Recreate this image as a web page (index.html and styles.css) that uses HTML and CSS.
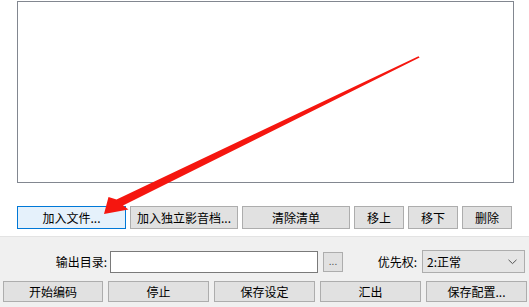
FILE: index.html
```html
<!DOCTYPE html>
<html lang="zh">
<head>
<meta charset="utf-8">
<link rel="stylesheet" href="styles.css">
</head>
<body>
<div class="app">
  <div class="top">
    <div class="list"></div>
    <div class="row1">
      <button class="btn focus w-add">加入文件...</button>
      <button class="btn w-mid">加入独立影音档...</button>
      <button class="btn w-mid">清除清单</button>
      <button class="btn w-small">移上</button>
      <button class="btn w-small">移下</button>
      <button class="btn w-small">删除</button>
    </div>
  </div>
  <div class="bottom">
    <div class="row2">
      <span class="lbl lbl-out">输出目录:</span>
      <div class="input"></div>
      <button class="btn dots">...</button>
      <span class="lbl lbl-pri">优先权:</span>
      <div class="combo">
        <span class="combo-text">2:正常</span>
        <svg class="chev" width="9" height="6" viewBox="0 0 9 6"><polyline points="0.5,0.8 4.5,4.6 8.5,0.8" fill="none" stroke="#555" stroke-width="1"/></svg>
      </div>
    </div>
    <div class="row3">
      <button class="btn w-first">开始编码</button>
      <button class="btn w-act">停止</button>
      <button class="btn w-act">保存设定</button>
      <button class="btn w-act">汇出</button>
      <button class="btn w-act">保存配置...</button>
    </div>
  </div>
  <svg class="arrow" width="529" height="307" viewBox="0 0 529 307">
    <polygon fill="#f5160f" points="418.5,56.3 419.6,57.6 123,205.5 128.5,209.5 104,214 108.5,197 116.5,199.5"/>
  </svg>
</div>
</body>
</html>
```

FILE: styles.css
```css
* { box-sizing: border-box; }
html, body {
  margin: 0;
  padding: 0;
  width: 529px;
  height: 307px;
  overflow: hidden;
  background: #f0f0f0;
  font-family: "Noto Sans CJK SC", "Microsoft YaHei", sans-serif;
  font-size: 12px;
  color: #000;
}
.app {
  position: relative;
  width: 529px;
  height: 307px;
}
.top {
  height: 236px;
  background: #fff;
  padding: 1px 0 0 17px;
}
.list {
  width: 497px;
  height: 182px;
  border: 1px solid #828790;
  background: #fff;
}
.row1 {
  display: flex;
  gap: 4px;
  margin-top: 23px;
  height: 23px;
}
.btn {
  margin: 0;
  padding: 0;
  font-family: inherit;
  font-size: 12px;
  line-height: 1;
  color: #000;
  background: #e1e1e1;
  border: 1px solid #adadad;
  display: flex;
  align-items: center;
  justify-content: center;
  white-space: nowrap;
  height: 23px;
}
.btn.focus {
  background: #e5f1fb;
  border-color: #0078d7;
}
.w-add { width: 109px; }
.w-mid { width: 108px; }
.w-small { width: 50px; }
.bottom {
  height: 71px;
  border-top: 1px solid #e3e3e3;
  padding-top: 13px;
}
.row2 {
  display: flex;
  align-items: center;
  height: 23px;
}
.lbl {
  line-height: 1;
  text-align: right;
  white-space: nowrap;
}
.lbl-out { width: 107px; }
.input {
  width: 208px;
  height: 22px;
  margin-left: 3px;
  background: #fff;
  border: 1px solid #7a7a7a;
}
.btn.dots {
  width: 20px;
  height: 20px;
  margin-left: 5px;
  font-size: 10px;
  color: #555;
  padding-bottom: 2px;
}
.lbl-pri { width: 74px; }
.combo {
  width: 103px;
  height: 23px;
  margin-left: 5px;
  background: #e5e5e5;
  border: 1px solid #adadad;
  display: flex;
  align-items: center;
  justify-content: space-between;
  padding: 0 7px 0 4px;
}
.combo-text { line-height: 1; }
.chev { display: block; }
.row3 {
  display: flex;
  gap: 5px;
  margin-top: 8px;
  padding-left: 3px;
}
.row3 .btn { height: 21px; }
.w-first { width: 100px; }
.w-act { width: 101px; }
.arrow {
  position: absolute;
  left: 0;
  top: 0;
  pointer-events: none;
}
```
